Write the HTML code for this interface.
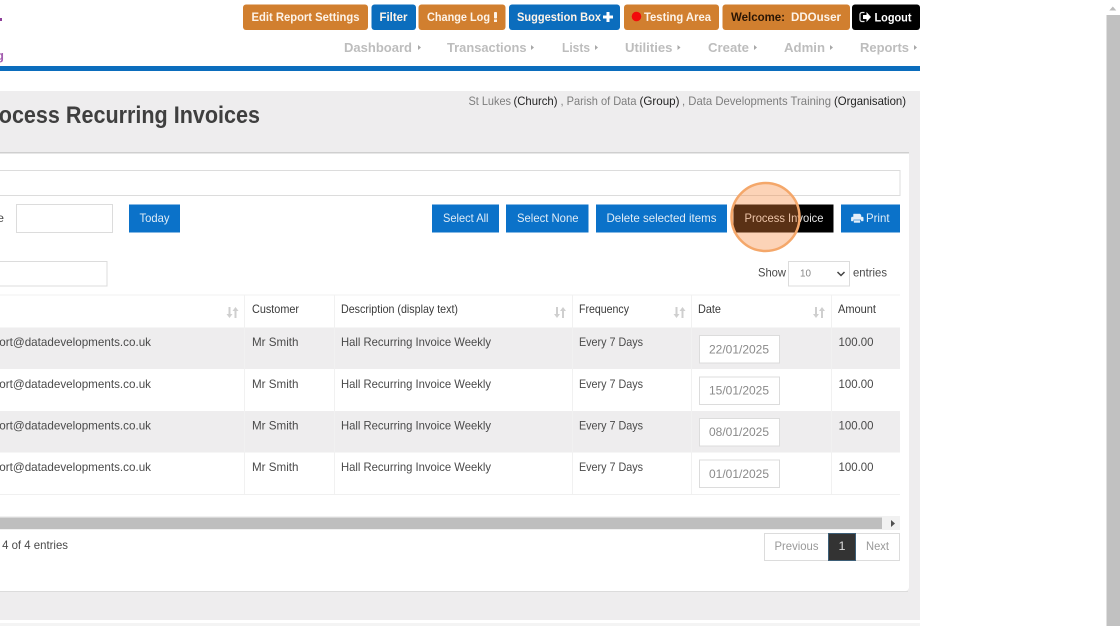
<!DOCTYPE html>
<html><head><meta charset="utf-8"><title>Process Recurring Invoices</title>
<style>
html,body{margin:0;padding:0;background:#fff;width:1120px;height:626px;overflow:hidden}
svg{display:block}
text{font-family:"Liberation Sans",Arial,sans-serif;font-size:12px;fill:#444;white-space:pre}
.b{font-weight:bold;fill:#fdf3e8}
.n{font-weight:bold;font-size:13px;fill:#bdbdbd}
.w{fill:#dfecf7}
.k{fill:#222}
.g{fill:#7d7d7d}
.h{fill:#3a3a3a}
.t{fill:#4a4a4a}
.d{fill:#8a8a8a}
</style></head><body>
<svg width="1120" height="626" viewBox="0 0 1120 626">
<defs>
<g id="s" fill="#cfcfcf"><path d="M1.5 0h2v7h2l-3 4-3-4h2zM7.5 11V4h-2l3-4 3 4h-2v7z"/></g>
</defs>
<!-- logo fragments -->
<rect x="0" y="18" width="2" height="3" fill="#8e3f9a"/>
<text x="-4" y="60" style="font-size:13px;font-weight:bold;fill:#a45fb0">g</text>
<!-- top buttons -->
<rect x="243" y="4.5" width="125" height="25.5" rx="3" fill="#d17f2f"/>
<rect x="371.5" y="4.5" width="44.5" height="25.5" rx="3" fill="#0b6dbd"/>
<rect x="418.5" y="4.5" width="87" height="25.5" rx="3" fill="#d17f2f"/>
<rect x="509" y="4.5" width="111" height="25.5" rx="3" fill="#0b6dbd"/>
<rect x="624" y="4.5" width="95" height="25.5" rx="3" fill="#d17f2f"/>
<rect x="722.5" y="4.5" width="127.5" height="25.5" rx="3" fill="#d17f2f"/>
<rect x="852" y="4.5" width="68" height="25.5" rx="3" fill="#000"/>
<text class="b" x="251.5" y="21" textLength="108" lengthAdjust="spacingAndGlyphs">Edit Report Settings</text>
<text class="b" x="379.5" y="21" textLength="28" lengthAdjust="spacingAndGlyphs">Filter</text>
<text class="b" x="427" y="21" textLength="63" lengthAdjust="spacingAndGlyphs">Change Log</text>
<rect x="494" y="12" width="3" height="6.5" rx=".8" fill="#fdf3e8"/><rect x="494" y="19.5" width="3" height="2.5" fill="#fdf3e8"/>
<text class="b" x="517" y="21" textLength="84" lengthAdjust="spacingAndGlyphs">Suggestion Box</text>
<path d="M606.500 12h3v3.500h3.500v3h-3.500V22h-3v-3.500H603v-3h3.500z" fill="#fff"/>
<circle cx="636.500" cy="16.500" r="4.800" fill="#f30b0b"/>
<text class="b" x="644" y="21" textLength="67" lengthAdjust="spacingAndGlyphs">Testing Area</text>
<text x="731" y="21" textLength="54" lengthAdjust="spacingAndGlyphs" style="font-weight:bold;fill:#2a1605">Welcome:</text>
<text class="b" x="791" y="21" textLength="50" lengthAdjust="spacingAndGlyphs">DDOuser</text>
<path d="M864.500 12.500h-2.500a2 2 0 0 0-2 2v5a2 2 0 0 0 2 2h2.500" fill="none" stroke="#e8e8e8" stroke-width="1.200"/>
<path d="M863 15h3.500v-3l4.500 5-4.500 5v-3H863z" fill="#fff"/>
<text class="b" x="874.500" y="21.500" textLength="37" lengthAdjust="spacingAndGlyphs" style="fill:#fff">Logout</text>
<!-- nav -->
<text class="n" x="344" y="52" textLength="68" lengthAdjust="spacingAndGlyphs">Dashboard</text>
<text class="n" x="447" y="52" textLength="79.500" lengthAdjust="spacingAndGlyphs">Transactions</text>
<text class="n" x="562" y="52" textLength="28" lengthAdjust="spacingAndGlyphs">Lists</text>
<text class="n" x="625" y="52" textLength="47.500" lengthAdjust="spacingAndGlyphs">Utilities</text>
<text class="n" x="708" y="52" textLength="41" lengthAdjust="spacingAndGlyphs">Create</text>
<text class="n" x="784" y="52" textLength="41" lengthAdjust="spacingAndGlyphs">Admin</text>
<text class="n" x="860" y="52" textLength="49" lengthAdjust="spacingAndGlyphs">Reports</text>
<g fill="#a8a8a8">
<path d="M418 45l3 2.500-3 2.500z"/><path d="M531 45l3 2.500-3 2.500z"/><path d="M595 45l3 2.500-3 2.500z"/><path d="M677.500 45l3 2.500-3 2.500z"/><path d="M754 45l3 2.500-3 2.500z"/><path d="M830 45l3 2.500-3 2.500z"/><path d="M914 45l3 2.500-3 2.500z"/>
</g>
<rect x="0" y="66" width="920" height="5" fill="#0b6dbd"/>
<!-- main gray panel -->
<rect x="0" y="91" width="920" height="529" fill="#eeedee"/>
<rect x="0" y="623" width="920" height="3" fill="#f4f4f4"/>
<rect x="0" y="152" width="909" height="1.500" fill="#cfcfcf"/>
<path d="M0 153.500H909V587a4 4 0 0 1-4 4H0z" fill="#fff"/>
<rect x="0" y="591" width="908" height="1" fill="#dcdcdc"/>
<!-- page title and breadcrumb -->
<text x="-24" y="123" textLength="284" lengthAdjust="spacingAndGlyphs" style="font-size:24px;font-weight:bold;fill:#3f3f3f">Process Recurring Invoices</text>
<text class="g" x="468.500" y="105" textLength="42.500" lengthAdjust="spacingAndGlyphs">St Lukes</text>
<text class="k" x="513.500" y="105" textLength="44" lengthAdjust="spacingAndGlyphs">(Church)</text>
<text class="g" x="560.500" y="105" textLength="76" lengthAdjust="spacingAndGlyphs">, Parish of Data</text>
<text class="k" x="639.500" y="105" textLength="40" lengthAdjust="spacingAndGlyphs">(Group)</text>
<text class="g" x="682" y="105" textLength="149" lengthAdjust="spacingAndGlyphs">, Data Developments Training</text>
<text class="k" x="834" y="105" textLength="72" lengthAdjust="spacingAndGlyphs">(Organisation)</text>
<!-- wide input -->
<rect x="-5" y="170.500" width="905" height="25" fill="#fff" stroke="#dcdcdc"/>
<!-- toolbar -->
<text class="t" x="-22" y="222" textLength="26" lengthAdjust="spacingAndGlyphs">Date</text>
<rect x="16.500" y="204.500" width="96" height="28" fill="#fff" stroke="#dcdcdc"/>
<rect x="129" y="204.500" width="51" height="28" fill="#0b72c9"/>
<text class="w" x="139.500" y="222" textLength="30" lengthAdjust="spacingAndGlyphs">Today</text>
<rect x="432" y="204.500" width="67" height="28" fill="#0b72c9"/>
<text class="w" x="443" y="222" textLength="45.500" lengthAdjust="spacingAndGlyphs">Select All</text>
<rect x="506" y="204.500" width="82.500" height="28" fill="#0b72c9"/>
<text class="w" x="517" y="222" textLength="61.500" lengthAdjust="spacingAndGlyphs">Select None</text>
<rect x="596" y="204.500" width="131" height="28" fill="#0b72c9"/>
<text class="w" x="606.500" y="222" textLength="110" lengthAdjust="spacingAndGlyphs">Delete selected items</text>
<rect x="733.500" y="204.500" width="100" height="28" fill="#000"/>
<text x="744.500" y="222" textLength="79" lengthAdjust="spacingAndGlyphs" style="fill:#e6e6e6">Process Invoice</text>
<rect x="841" y="204.500" width="59" height="28" fill="#0b72c9"/>
<path d="M854 217.500V214.500h6.500l1 1v2M852.500 217.500h10.500a.8.8 0 0 1 .8.8v3.200h-2v-1.500h-8v1.500h-2v-3.200a.8.8 0 0 1 .7-.8zM854.500 221h6v2h-6z" transform="translate(-.5 -.5)" fill="#e4eff9" stroke="#e4eff9" stroke-width=".4"/>
<text class="w" x="866" y="222" textLength="23.500" lengthAdjust="spacingAndGlyphs">Print</text>
<!-- highlight circle -->
<circle cx="765.500" cy="217" r="34" fill="#f68639" fill-opacity=".365" stroke="#f4a76a" stroke-width="2.500"/>
<!-- search / length -->
<rect x="-5" y="261.500" width="112" height="24.500" fill="#fff" stroke="#dcdcdc"/>
<text class="t" x="758" y="276.500" textLength="28" lengthAdjust="spacingAndGlyphs">Show</text>
<rect x="788.500" y="261.500" width="61" height="24.500" fill="#fff" stroke="#dcdcdc"/>
<text x="800" y="276.500" textLength="11" lengthAdjust="spacingAndGlyphs" style="font-size:10px;fill:#888">10</text>
<path d="M837.500 272l3.500 3.500 3.500-3.500" fill="none" stroke="#444" stroke-width="1.500"/>
<text class="t" x="853" y="276.500" textLength="34" lengthAdjust="spacingAndGlyphs">entries</text>
<!-- table -->
<rect x="0" y="294.500" width="900" height="1" fill="#f0f0f0"/>
<rect x="0" y="327.500" width="900" height="41.500" fill="#eeedee"/>
<rect x="0" y="411" width="900" height="41.500" fill="#eeedee"/>
<rect x="0" y="494" width="900" height="1" fill="#f0f0f0"/>
<g fill="#f1f1f1">
<rect x="244" y="295" width="1" height="199"/><rect x="334" y="295" width="1" height="199"/><rect x="572" y="295" width="1" height="199"/><rect x="691" y="295" width="1" height="199"/><rect x="831" y="295" width="1" height="199"/>
</g>
<text class="h" x="252" y="313" textLength="47" lengthAdjust="spacingAndGlyphs">Customer</text>
<text class="h" x="341" y="313" textLength="117" lengthAdjust="spacingAndGlyphs">Description (display text)</text>
<text class="h" x="579" y="313" textLength="50" lengthAdjust="spacingAndGlyphs">Frequency</text>
<text class="h" x="698" y="313" textLength="23" lengthAdjust="spacingAndGlyphs">Date</text>
<text class="h" x="838" y="313" textLength="38" lengthAdjust="spacingAndGlyphs">Amount</text>
<use href="#s" x="227" y="307"/><use href="#s" x="554.500" y="307"/><use href="#s" x="674" y="307"/><use href="#s" x="813.500" y="307"/>

<g>
<text class="t" x="-26" y="346" textLength="177" lengthAdjust="spacingAndGlyphs">support@datadevelopments.co.uk</text>
<text class="t" x="252" y="346" textLength="46.500" lengthAdjust="spacingAndGlyphs">Mr Smith</text>
<text class="t" x="341" y="346" textLength="150" lengthAdjust="spacingAndGlyphs">Hall Recurring Invoice Weekly</text>
<text class="t" x="579" y="346" textLength="64" lengthAdjust="spacingAndGlyphs">Every 7 Days</text>
<rect x="699.500" y="335.500" width="80" height="27.500" fill="#fff" stroke="#dcdcdc"/>
<text class="d" x="709" y="353.500" textLength="60" lengthAdjust="spacingAndGlyphs">22/01/2025</text>
<text class="t" x="838.500" y="346" textLength="35" lengthAdjust="spacingAndGlyphs">100.00</text>
</g>
<g>
<text class="t" x="-26" y="388" textLength="177" lengthAdjust="spacingAndGlyphs">support@datadevelopments.co.uk</text>
<text class="t" x="252" y="388" textLength="46.500" lengthAdjust="spacingAndGlyphs">Mr Smith</text>
<text class="t" x="341" y="388" textLength="150" lengthAdjust="spacingAndGlyphs">Hall Recurring Invoice Weekly</text>
<text class="t" x="579" y="388" textLength="64" lengthAdjust="spacingAndGlyphs">Every 7 Days</text>
<rect x="699.500" y="377" width="80" height="27.500" fill="#fff" stroke="#dcdcdc"/>
<text class="d" x="709" y="394.500" textLength="60" lengthAdjust="spacingAndGlyphs">15/01/2025</text>
<text class="t" x="838.500" y="388" textLength="35" lengthAdjust="spacingAndGlyphs">100.00</text>
</g>
<g>
<text class="t" x="-26" y="429.500" textLength="177" lengthAdjust="spacingAndGlyphs">support@datadevelopments.co.uk</text>
<text class="t" x="252" y="429.500" textLength="46.500" lengthAdjust="spacingAndGlyphs">Mr Smith</text>
<text class="t" x="341" y="429.500" textLength="150" lengthAdjust="spacingAndGlyphs">Hall Recurring Invoice Weekly</text>
<text class="t" x="579" y="429.500" textLength="64" lengthAdjust="spacingAndGlyphs">Every 7 Days</text>
<rect x="699.500" y="418.500" width="80" height="27.500" fill="#fff" stroke="#dcdcdc"/>
<text class="d" x="709" y="436" textLength="60" lengthAdjust="spacingAndGlyphs">08/01/2025</text>
<text class="t" x="838.500" y="429.500" textLength="35" lengthAdjust="spacingAndGlyphs">100.00</text>
</g>
<g>
<text class="t" x="-26" y="471" textLength="177" lengthAdjust="spacingAndGlyphs">support@datadevelopments.co.uk</text>
<text class="t" x="252" y="471" textLength="46.500" lengthAdjust="spacingAndGlyphs">Mr Smith</text>
<text class="t" x="341" y="471" textLength="150" lengthAdjust="spacingAndGlyphs">Hall Recurring Invoice Weekly</text>
<text class="t" x="579" y="471" textLength="64" lengthAdjust="spacingAndGlyphs">Every 7 Days</text>
<rect x="699.500" y="460" width="80" height="27.500" fill="#fff" stroke="#dcdcdc"/>
<text class="d" x="709" y="478" textLength="60" lengthAdjust="spacingAndGlyphs">01/01/2025</text>
<text class="t" x="838.500" y="471" textLength="35" lengthAdjust="spacingAndGlyphs">100.00</text>
</g>
<!-- table scrollbar -->
<rect x="0" y="516" width="900" height="14" fill="#f1f1f1"/>
<rect x="0" y="517.500" width="882" height="11.500" fill="#bebebe"/>
<path d="M891 520l4 3.500-4 3.500z" fill="#505050"/>
<!-- footer -->
<text class="t" x="-67" y="549" textLength="135" lengthAdjust="spacingAndGlyphs">Showing 1 to 4 of 4 entries</text>
<rect x="764.500" y="533.500" width="135" height="27" fill="#fff" stroke="#dcdcdc"/>
<text x="774.500" y="550" textLength="44" lengthAdjust="spacingAndGlyphs" style="fill:#999">Previous</text>
<rect x="828.500" y="533.500" width="27" height="27" fill="#333" stroke="#3d5f78"/>
<text x="838.500" y="550" textLength="7" lengthAdjust="spacingAndGlyphs" style="fill:#ddd">1</text>
<text x="866" y="550" textLength="23" lengthAdjust="spacingAndGlyphs" style="fill:#999">Next</text>
<!-- page scrollbar -->
<rect x="1106.500" y="15" width="13.500" height="611" fill="#c1c1c1"/>
<path d="M1112.800 6.500l-3.500 4h7z" fill="#bcbcbc"/>
</svg>
</body></html>
